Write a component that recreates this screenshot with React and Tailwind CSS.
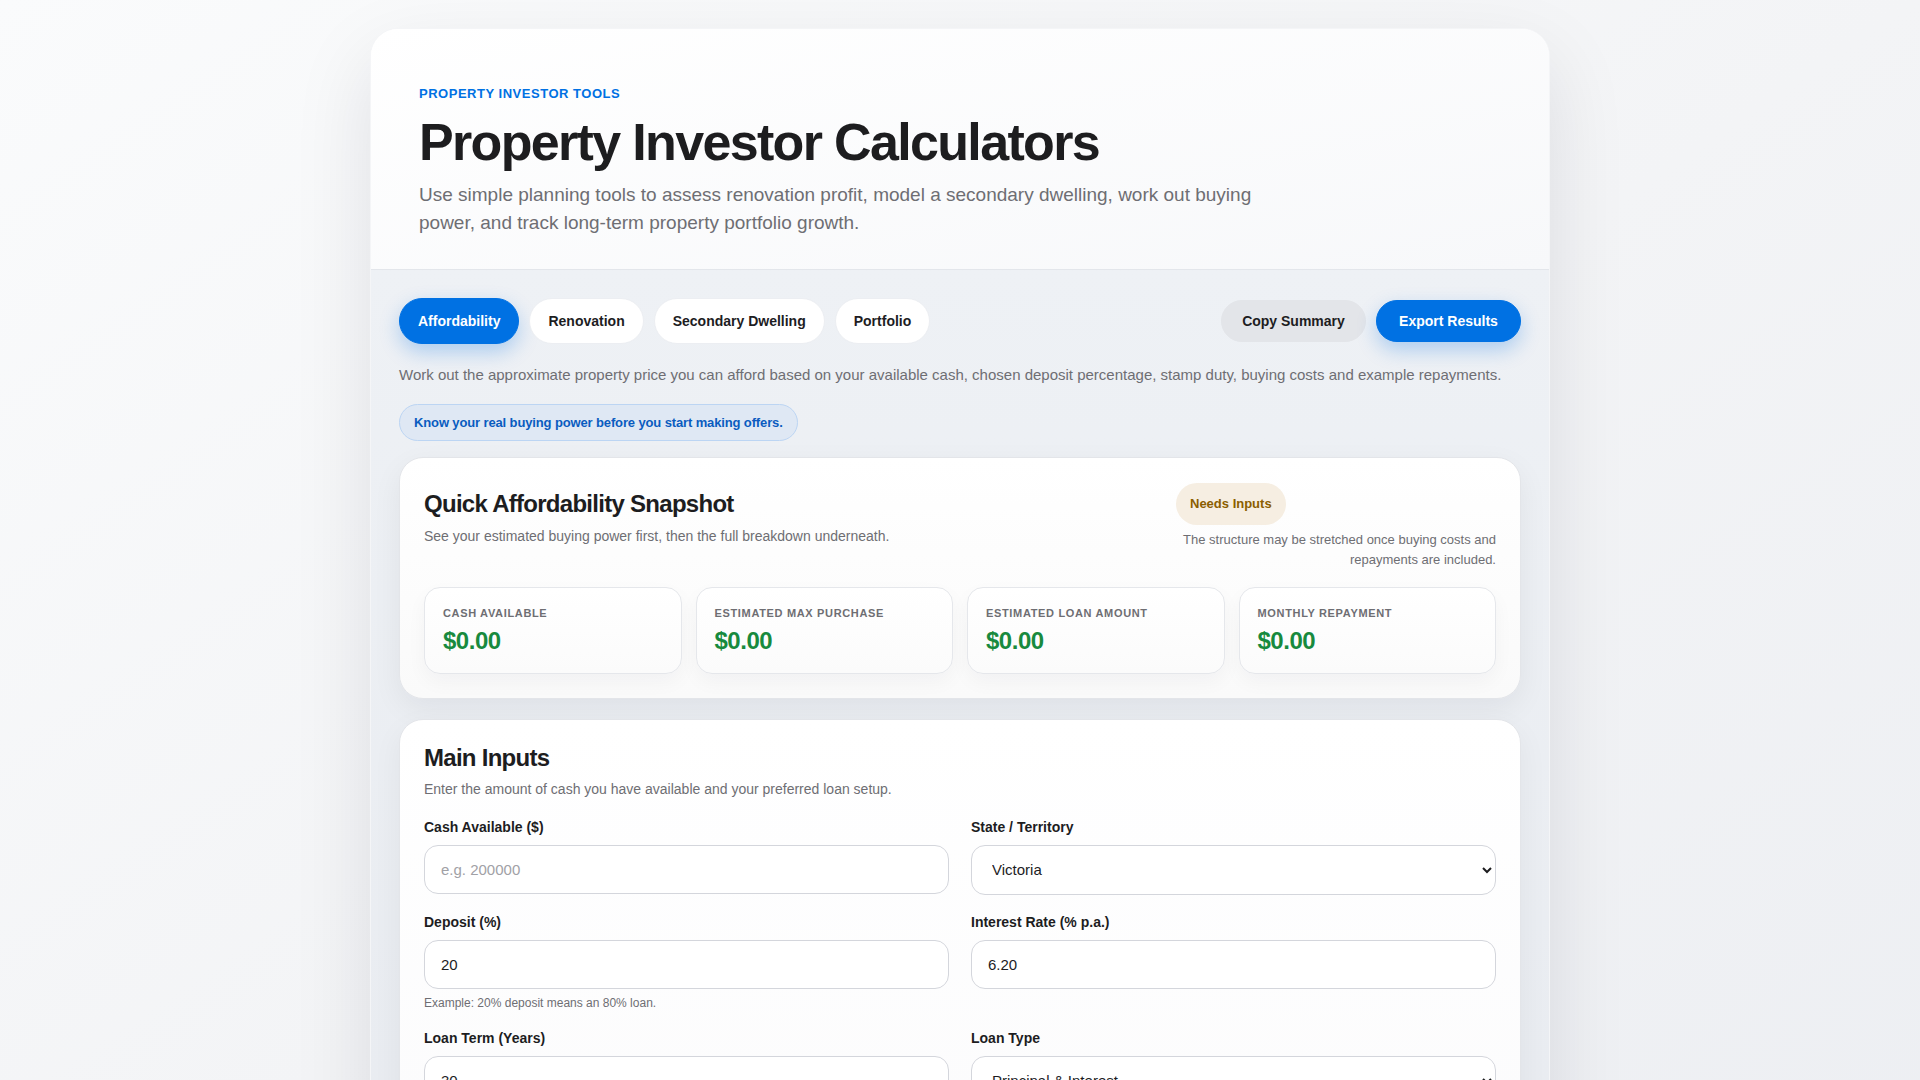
import React from 'react';

const tabs = ['Affordability', 'Renovation', 'Secondary Dwelling', 'Portfolio'];

const metrics = [
  { label: 'Cash Available', value: '$0.00' },
  { label: 'Estimated Max Purchase', value: '$0.00' },
  { label: 'Estimated Loan Amount', value: '$0.00' },
  { label: 'Monthly Repayment', value: '$0.00' },
];

const Field = ({ label, children, hint }) => (
  <div className="flex flex-col">
    <label className="mb-2 text-sm leading-5 font-bold text-[#1d1d1f]">{label}</label>
    {children}
    {hint && <p className="mt-1.5 text-xs leading-4 text-[#6e6e73]">{hint}</p>}
  </div>
);

const inputCls =
  'h-[49px] w-full rounded-[14px] border border-[#d4d6dc] bg-white px-4 text-[15px] text-[#1d1d1f] placeholder:text-[#a1a1a6] outline-none';
const selectCls =
  'h-[50px] w-full rounded-[14px] border border-[#d4d6dc] bg-white px-4 text-[15px] text-[#1d1d1f] outline-none';

export default function App() {
  return (
    <div className="min-h-screen bg-gradient-to-br from-[#fafbfc] via-[#f3f4f6] to-[#eceef2] pt-7 pb-10 font-['Liberation_Sans',Arial,sans-serif] text-[#1d1d1f]">
      <div className="mx-auto max-w-[1180px] overflow-hidden rounded-[28px] border border-[#f4f5f7] bg-white shadow-[0_30px_80px_rgba(15,23,42,0.10)]">
        {/* Hero */}
        <header className="border-b border-[#e3e6eb] bg-gradient-to-br from-white to-[#f7f8fa] px-12 pt-[57px] pb-8">
          <p className="mb-3 text-[13px] leading-4 font-bold tracking-[0.04em] text-[#0071e3] uppercase">
            Property Investor Tools
          </p>
          <h1 className="text-[52px] leading-[1.1] font-bold tracking-[-0.032em] text-[#1d1d1f]">
            Property Investor Calculators
          </h1>
          <p className="mt-[10px] max-w-[860px] text-[19px] leading-7 text-[#6e6e73]">
            Use simple planning tools to assess renovation profit, model a secondary dwelling, work out buying
            power, and track long-term property portfolio growth.
          </p>
        </header>

        {/* Body */}
        <div className="bg-gradient-to-b from-[#eef1f5] to-[#e8ebf0] p-7">
          <div className="flex items-center justify-between">
            <div className="flex items-center gap-2.5">
              {tabs.map((t, i) =>
                i === 0 ? (
                  <button
                    key={t}
                    className="rounded-full border border-[#0071e3] bg-[#0071e3] px-[18px] py-3 text-sm leading-5 font-bold text-white shadow-[0_8px_20px_rgba(0,113,227,0.28)]"
                  >
                    {t}
                  </button>
                ) : (
                  <button
                    key={t}
                    className="rounded-full border border-[#eceef2] bg-white px-[18px] py-3 text-sm leading-5 font-bold text-[#1d1d1f]"
                  >
                    {t}
                  </button>
                )
              )}
            </div>
            <div className="flex items-center gap-2.5">
              <button className="min-w-[145px] rounded-full border border-[#e3e5e9] bg-[#e3e5e9] px-5 py-2.5 text-sm leading-5 font-bold text-[#1d1d1f]">
                Copy Summary
              </button>
              <button className="min-w-[145px] rounded-full border border-[#0071e3] bg-[#0071e3] px-5 py-2.5 text-sm leading-5 font-bold text-white shadow-[0_8px_20px_rgba(0,113,227,0.28)]">
                Export Results
              </button>
            </div>
          </div>

          <p className="mt-5 text-[15px] leading-[22px] text-[#6e6e73]">
            Work out the approximate property price you can afford based on your available cash, chosen deposit
            percentage, stamp duty, buying costs and example repayments.
          </p>

          <div className="mt-[18px]">
            <span className="inline-block rounded-full border border-[#bcd5f3] bg-[#dfe8f4] px-3.5 py-[9px] text-[13px] leading-[17px] font-bold tracking-[-0.01em] text-[#0a5cc0]">
              Know your real buying power before you start making offers.
            </span>
          </div>

          {/* Snapshot */}
          <section className="mt-4 rounded-3xl border border-[#e3e5e9] bg-gradient-to-b from-white to-[#fafafa] px-6 pt-[25px] pb-6 shadow-[0_10px_30px_rgba(15,23,42,0.06)]">
            <div className="flex items-start justify-between">
              <div className="pt-[7px]">
                <h2 className="text-2xl leading-[1.2] font-bold tracking-[-0.03em] text-[#1d1d1f]">
                  Quick Affordability Snapshot
                </h2>
                <p className="mt-[7px] text-sm leading-5 text-[#6e6e73]">
                  See your estimated buying power first, then the full breakdown underneath.
                </p>
              </div>
              <div className="flex w-[320px] flex-col items-start">
                <span className="rounded-full bg-[#f6eee2] px-3.5 py-3 text-[13px] leading-[18px] font-bold text-[#8b5e00]">
                  Needs Inputs
                </span>
                <p className="mt-[5px] self-stretch text-right text-[13px] leading-[19.5px] text-[#6e6e73]">
                  The structure may be stretched once buying costs and repayments are included.
                </p>
              </div>
            </div>

            <div className="mt-[18px] grid grid-cols-4 gap-3.5">
              {metrics.map((m) => (
                <div
                  key={m.label}
                  className="rounded-2xl border border-[#e5e7eb] bg-gradient-to-b from-white to-[#fbfbfb] px-[18px] py-[17px] shadow-[0_8px_20px_rgba(15,23,42,0.04)]"
                >
                  <p className="text-[11px] leading-4 font-bold tracking-[0.06em] text-[#6e6e73] uppercase">{m.label}</p>
                  <p className="mt-1.5 text-2xl leading-[1.2] font-bold tracking-[-0.02em] text-[#188a3e]">{m.value}</p>
                </div>
              ))}
            </div>
          </section>

          {/* Main inputs */}
          <section className="mt-5 rounded-3xl border border-[#e3e5e9] bg-gradient-to-b from-white to-[#fbfbfc] p-6 shadow-[0_10px_30px_rgba(15,23,42,0.05)]">
            <h2 className="text-2xl leading-[1.2] font-bold tracking-[-0.03em] text-[#1d1d1f]">Main Inputs</h2>
            <p className="mt-1.5 text-sm leading-5 text-[#6e6e73]">
              Enter the amount of cash you have available and your preferred loan setup.
            </p>

            <div className="mt-[18px] grid grid-cols-2 gap-x-[22px] gap-y-[17px]">
              <Field label="Cash Available ($)">
                <input className={inputCls} placeholder="e.g. 200000" />
              </Field>
              <Field label="State / Territory">
                <select className={selectCls} defaultValue="VIC">
                  <option value="NSW">New South Wales</option>
                  <option value="VIC">Victoria</option>
                  <option value="QLD">Queensland</option>
                  <option value="WA">Western Australia</option>
                  <option value="SA">South Australia</option>
                  <option value="TAS">Tasmania</option>
                  <option value="ACT">Australian Capital Territory</option>
                  <option value="NT">Northern Territory</option>
                </select>
              </Field>
              <Field label="Deposit (%)" hint="Example: 20% deposit means an 80% loan.">
                <input className={inputCls} defaultValue="20" />
              </Field>
              <Field label="Interest Rate (% p.a.)">
                <input className={inputCls} defaultValue="6.20" />
              </Field>
              <Field label="Loan Term (Years)">
                <input className={inputCls} defaultValue="30" />
              </Field>
              <Field label="Loan Type">
                <select className={selectCls} defaultValue="pi">
                  <option value="pi">Principal &amp; Interest</option>
                  <option value="io">Interest Only</option>
                </select>
              </Field>
              <Field label="First Home Buyer">
                <select className={selectCls} defaultValue="no">
                  <option value="no">No</option>
                  <option value="yes">Yes</option>
                </select>
              </Field>
              <Field label="Other Buying Costs ($)">
                <input className={inputCls} placeholder="e.g. 3000" />
              </Field>
            </div>
          </section>
        </div>
      </div>
    </div>
  );
}
